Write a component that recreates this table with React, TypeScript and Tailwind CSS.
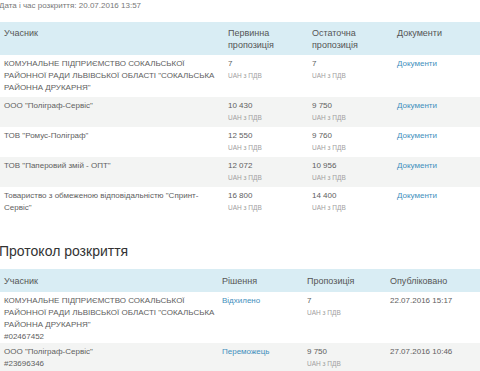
import React from "react";

const font = { fontFamily: '"Liberation Sans", Arial, sans-serif' };

type Row1 = { name: string[]; first: string; last: string };

const rows1: Row1[] = [
  {
    name: [
      "КОМУНАЛЬНЕ ПІДПРИЄМСТВО СОКАЛЬСЬКОЇ",
      "РАЙОННОЇ РАДИ ЛЬВІВСЬКОЇ ОБЛАСТІ \"СОКАЛЬСЬКА",
      "РАЙОННА ДРУКАРНЯ\"",
    ],
    first: "7",
    last: "7",
  },
  { name: ["ООО \"Поліграф-Сервіс\""], first: "10 430", last: "9 750" },
  { name: ["ТОВ \"Ромус-Поліграф\""], first: "12 550", last: "9 760" },
  { name: ["ТОВ \"Паперовий змій - ОПТ\""], first: "12 072", last: "10 956" },
  {
    name: ["Товариство з обмеженою відповідальністю \"Спринт-", "Сервіс\""],
    first: "16 800",
    last: "14 400",
  },
];

const rows2 = [
  {
    name: [
      "КОМУНАЛЬНЕ ПІДПРИЄМСТВО СОКАЛЬСЬКОЇ",
      "РАЙОННОЇ РАДИ ЛЬВІВСЬКОЇ ОБЛАСТІ \"СОКАЛЬСЬКА",
      "РАЙОННА ДРУКАРНЯ\"",
      "#02467452",
    ],
    decision: "Відхилено",
    offer: "7",
    date: "22.07.2016 15:17",
  },
  {
    name: ["ООО \"Поліграф-Сервіс\"", "#23696346"],
    decision: "Переможець",
    offer: "9 750",
    date: "27.07.2016 10:46",
  },
];

function Price({ v }: { v: string }) {
  return (
    <div>
      <div className="leading-[12px]">{v}</div>
      <div className="text-[6.5px] leading-[11px] text-[#a0a0a0]">UAH з ПДВ</div>
    </div>
  );
}

export default function App() {
  return (
    <div style={font} className="w-[480px] h-[371px] overflow-hidden bg-white text-[#606060] text-[8px]">
      <div className="h-[22px] -ml-[1px] text-[8px] leading-[12px] text-[#777]">
        Дата і час розкриття: 20.07.2016 13:57
      </div>

      <table className="w-[480px] table-fixed border-collapse">
        <colgroup>
          <col className="w-[224px]" />
          <col className="w-[84px]" />
          <col className="w-[85px]" />
          <col className="w-[87px]" />
        </colgroup>
        <thead>
          <tr className="bg-[#d9edf4] text-[9px] leading-[12px] text-[#555]">
            <th className="text-left font-normal align-top px-[4px] pt-[5px] pb-[4px] h-[33px]">Учасник</th>
            <th className="text-left font-normal align-top px-[4px] pt-[5px] pb-[4px]">Первинна<br />пропозиція</th>
            <th className="text-left font-normal align-top px-[4px] pt-[5px] pb-[4px]">Остаточна<br />пропозиція</th>
            <th className="text-left font-normal align-top px-[4px] pt-[5px] pb-[4px]">Документи</th>
          </tr>
        </thead>
        <tbody>
          {rows1.map((r, i) => (
            <tr key={i} className={i % 2 === 1 ? "bg-[#f3f4f3]" : "bg-white"}>
              <td className={"align-top px-[4px] pt-[3px] leading-[12px] " + (i === 0 ? "h-[42px]" : "h-[30px]")}>
                {r.name.map((l, j) => (
                  <div key={j} className="whitespace-nowrap">{l}</div>
                ))}
              </td>
              <td className="align-top px-[4px] pt-[3px]"><Price v={r.first} /></td>
              <td className="align-top px-[4px] pt-[3px]"><Price v={r.last} /></td>
              <td className="align-top px-[4px] pt-[3px] leading-[12px] text-[#3f8fbd]">Документи</td>
            </tr>
          ))}
        </tbody>
      </table>

      <div className="pt-[25px] h-[52px] text-[14px] leading-[18px] text-[#333] -ml-[1px]">Протокол розкриття</div>

      <table className="w-[480px] table-fixed border-collapse">
        <colgroup>
          <col className="w-[218px]" />
          <col className="w-[85px]" />
          <col className="w-[83px]" />
          <col className="w-[94px]" />
        </colgroup>
        <thead>
          <tr className="bg-[#d9edf4] text-[9px] leading-[12px] text-[#555]">
            <th className="text-left font-normal align-top px-[4px] pt-[6px] pb-[5px] h-[23px]">Учасник</th>
            <th className="text-left font-normal align-top px-[4px] pt-[6px] pb-[5px]">Рішення</th>
            <th className="text-left font-normal align-top px-[4px] pt-[6px] pb-[5px]">Пропозиція</th>
            <th className="text-left font-normal align-top px-[4px] pt-[6px] pb-[5px]">Опубліковано</th>
          </tr>
        </thead>
        <tbody>
          {rows2.map((r, i) => (
            <tr key={i} className={i % 2 === 1 ? "bg-[#f3f4f3]" : "bg-white"}>
              <td className={"align-top px-[4px] pt-[3px] leading-[12px] " + (i === 0 ? "h-[51px]" : "h-[30px]")}>
                {r.name.map((l, j) => (
                  <div key={j} className="whitespace-nowrap">{l}</div>
                ))}
              </td>
              <td className="align-top px-[4px] pt-[3px] leading-[12px] text-[#3f8fbd]">{r.decision}</td>
              <td className="align-top px-[4px] pt-[3px]"><Price v={r.offer} /></td>
              <td className="align-top px-[4px] pt-[3px] leading-[12px]">{r.date}</td>
            </tr>
          ))}
        </tbody>
      </table>
    </div>
  );
}
